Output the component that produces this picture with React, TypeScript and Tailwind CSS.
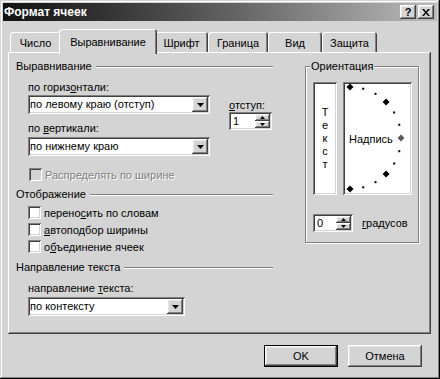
import React from 'react';

const raised =
  'shadow-[inset_-1px_-1px_#404040,inset_1px_1px_#ffffff,inset_-2px_-2px_#808080,inset_2px_2px_#e6e6e6]';
const sunken =
  'shadow-[inset_1px_1px_#808080,inset_-1px_-1px_#ffffff,inset_2px_2px_#404040,inset_-2px_-2px_#d4d4d4]';

const DownArrow = ({ w = 7 }: { w?: number }) => (
  <svg width={w} height={Math.ceil(w / 2)} viewBox={`0 0 ${w} ${Math.ceil(w / 2)}`}>
    <path d={`M0 0H${w}L${w / 2} ${Math.ceil(w / 2)}Z`} fill="#000" />
  </svg>
);

const UpArrow = ({ w = 5 }: { w?: number }) => (
  <svg width={w} height={Math.ceil(w / 2)} viewBox={`0 0 ${w} ${Math.ceil(w / 2)}`}>
    <path d={`M0 ${Math.ceil(w / 2)}H${w}L${w / 2} 0Z`} fill="#000" />
  </svg>
);

const Combo = ({ text, width }: { text: string; width: string }) => (
  <div className={`flex h-[19px] ${width} bg-white ${sunken} p-[2px]`}>
    <span className="flex-1 leading-[15px] whitespace-nowrap">{text}</span>
    <span className={`flex w-[16px] items-center justify-center bg-[#d4d4d4] ${raised}`}>
      <DownArrow />
    </span>
  </div>
);

const Spinner = ({ value, width }: { value: string; width: string }) => (
  <div className={`flex h-[18px] ${width} bg-white ${sunken} p-[2px]`}>
    <span className="flex-1 pl-[2px] leading-[14px]">{value}</span>
    <div className="flex w-[15px] flex-col">
      <span className={`flex flex-1 items-center justify-center bg-[#d4d4d4] ${raised}`}>
        <UpArrow />
      </span>
      <span className={`flex flex-1 items-center justify-center bg-[#d4d4d4] ${raised}`}>
        <DownArrow w={5} />
      </span>
    </div>
  </div>
);

const Check = ({ children, disabled }: { children: React.ReactNode; disabled?: boolean }) => (
  <div className="flex h-[17px] items-center">
    <span className={`h-[13px] w-[13px] ${disabled ? 'bg-[#d4d4d4]' : 'bg-white'} ${sunken}`} />
    <span
      className={`ml-[3px] leading-[14px] ${disabled ? 'text-[#808080] [text-shadow:1px_1px_#ffffff]' : ''}`}
    >
      {children}
    </span>
  </div>
);

const Section = ({ title }: { title: string }) => (
  <div className="flex h-[14px] items-center">
    <span className="leading-[14px]">{title}</span>
    <div className="ml-[4px] mt-[2px] h-[2px] flex-1 border-t border-b border-t-[#808080] border-b-white" />
  </div>
);

const tabs = [
  { name: 'Число', w: 'w-[51px]' },
  { name: 'Выравнивание', w: 'w-[98px]', active: true },
  { name: 'Шрифт', w: 'w-[53px]' },
  { name: 'Граница', w: 'w-[60px]' },
  { name: 'Вид', w: 'w-[54px]' },
  { name: 'Защита', w: 'w-[55px]' },
];

const ArcDial = () => {
  const pts = Array.from({ length: 13 }, (_, i) => {
    const a = ((90 - i * 15) * Math.PI) / 180;
    return { x: 7 + 51 * Math.cos(a), y: 56 - 51 * Math.sin(a), big: i % 3 === 0, mid: i === 6 };
  });
  return (
    <svg className="absolute inset-0" width="69" height="113" viewBox="0 0 69 113">
      {pts.map((p, i) =>
        p.big ? (
          <path
            key={i}
            d={`M${p.x} ${p.y - 3.5}L${p.x + 3.5} ${p.y}L${p.x} ${p.y + 3.5}L${p.x - 3.5} ${p.y}Z`}
            fill={p.mid ? '#5a5a5a' : '#000'}
          />
        ) : (
          <rect key={i} x={p.x - 1} y={p.y - 1} width="2" height="2" fill="#000" />
        ),
      )}
    </svg>
  );
};

export default function App() {
  return (
    <div
      className={`flex h-[379px] w-[440px] flex-col bg-[#d4d4d4] p-[3px] font-['Liberation_Sans',Arial,sans-serif] text-[11px] text-black shadow-[inset_-1px_-1px_#000000,inset_1px_1px_#d4d4d4,inset_-2px_-2px_#808080,inset_2px_2px_#ffffff]`}
    >
      {/* title bar */}
      <div className="flex h-[18px] items-center bg-linear-to-r from-[#121212] via-[#5e5e5e] to-[#bdbdbd] pl-[1px] pr-[3px]">
        <span className="flex-1 text-[12px] font-bold leading-[18px] text-white">Формат ячеек</span>
        <span className={`flex h-[14px] w-[16px] items-center justify-center bg-[#d4d4d4] ${raised}`}>
          <span className="text-[11px] font-bold leading-[11px]">?</span>
        </span>
        <span className={`ml-[2px] flex h-[14px] w-[16px] items-center justify-center bg-[#d4d4d4] ${raised}`}>
          <svg width="8" height="7" viewBox="0 0 8 7">
            <path d="M0 0h2l2 2.4L6 0h2L5 3.5 8 7H6L4 4.6 2 7H0l3-3.5z" fill="#000" />
          </svg>
        </span>
      </div>

      {/* tabs */}
      <div className="mt-[8px] flex h-[23px] items-end pl-[7px]">
        {tabs.map((t) =>
          t.active ? (
            <div
              key={t.name}
              className={`relative z-10 -mx-[2px] mb-[-2px] h-[25px] ${t.w} rounded-t-[3px] bg-[#d4d4d4] pt-[6px] text-center leading-[14px] shadow-[inset_1px_1px_#ffffff,inset_-1px_0_#404040,inset_-2px_0_#808080]`}
            >
              {t.name}
            </div>
          ) : (
            <div
              key={t.name}
              className={`h-[20px] ${t.w} rounded-t-[3px] pt-[4px] text-center leading-[14px] shadow-[inset_1px_1px_#ffffff,inset_-1px_0_#404040,inset_-2px_0_#808080]`}
            >
              {t.name}
            </div>
          ),
        )}
      </div>

      {/* tab panel */}
      <div
        className={`ml-[5px] flex h-[282px] w-[423px] pl-[8px] pt-[7px] shadow-[inset_-1px_-1px_#404040,inset_1px_1px_#ffffff,inset_-2px_-2px_#808080]`}
      >
        <div className="flex w-[257px] flex-col">
          <Section title="Выравнивание" />
          <div className="flex pl-[12px]">
            <div className="flex w-[182px] flex-col">
              <span className="mt-[7px] leading-[14px]">
                по гориз<u>о</u>нтали:
              </span>
              <div className="mt-[1px]">
                <Combo text="по левому краю (отступ)" width="w-[182px]" />
              </div>
              <span className="mt-[7px] leading-[14px]">
                по <u>в</u>ертикали:
              </span>
              <div className="mt-[2px]">
                <Combo text="по нижнему краю" width="w-[182px]" />
              </div>
            </div>
            <div className="ml-[19px] flex flex-col">
              <span className="mt-[25px] leading-[14px]">
                <u>о</u>тступ:
              </span>
              <Spinner value="1" width="w-[43px]" />
            </div>
          </div>
          <div className="mt-[10px] pl-[13px]">
            <Check disabled>Распределять по ширине</Check>
          </div>
          <div className="mt-[4px]">
            <Section title="Отображение" />
          </div>
          <div className="mt-[3px] flex flex-col pl-[12px]">
            <Check>
              перено<u>с</u>ить по словам
            </Check>
            <Check>
              <u>а</u>втоподбор ширины
            </Check>
            <Check>
              о<u>б</u>ъединение ячеек
            </Check>
          </div>
          <div className="mt-[5px]">
            <Section title="Направление текста" />
          </div>
          <div className="flex flex-col pl-[12px]">
            <span className="mt-[7px] leading-[14px]">
              направление <u>т</u>екста:
            </span>
            <div className="mt-[2px]">
              <Combo text="по контексту" width="w-[157px]" />
            </div>
          </div>
        </div>

        {/* orientation group */}
        <div className="ml-[32px] mt-[7px] flex h-[177px] w-[114px] flex-col border border-[#808080] shadow-[inset_1px_1px_#ffffff,1px_1px_#ffffff]">
          <span className="-mt-[8px] ml-[4px] w-fit bg-[#d4d4d4] px-[1px] leading-[14px]">Ориентация</span>
          <div className="ml-[7px] mt-[9px] flex gap-[6px]">
            <div className={`flex h-[113px] w-[24px] flex-col items-center justify-center bg-white ${sunken}`}>
              {['Т', 'е', 'к', 'с', 'т'].map((c, i) => (
                <span key={i} className="leading-[13px]">
                  {c}
                </span>
              ))}
            </div>
            <div className={`relative flex h-[113px] w-[69px] items-center bg-white pl-[6px] ${sunken}`}>
              <ArcDial />
              <span className="relative leading-[14px]">Надпись</span>
            </div>
          </div>
          <div className="ml-[7px] mt-[19px] flex items-center">
            <Spinner value="0" width="w-[40px]" />
            <span className="ml-[9px] leading-[14px]">
              <u>г</u>радусов
            </span>
          </div>
        </div>
      </div>

      {/* buttons */}
      <div className="mt-[11px] flex justify-end gap-[10px] pr-[15px]">
        <button className={`flex h-[22px] w-[74px] items-center justify-center border border-black bg-[#d4d4d4] ${raised}`}>
          OK
        </button>
        <button className={`flex h-[22px] w-[74px] items-center justify-center bg-[#d4d4d4] ${raised}`}>
          Отмена
        </button>
      </div>
    </div>
  );
}
